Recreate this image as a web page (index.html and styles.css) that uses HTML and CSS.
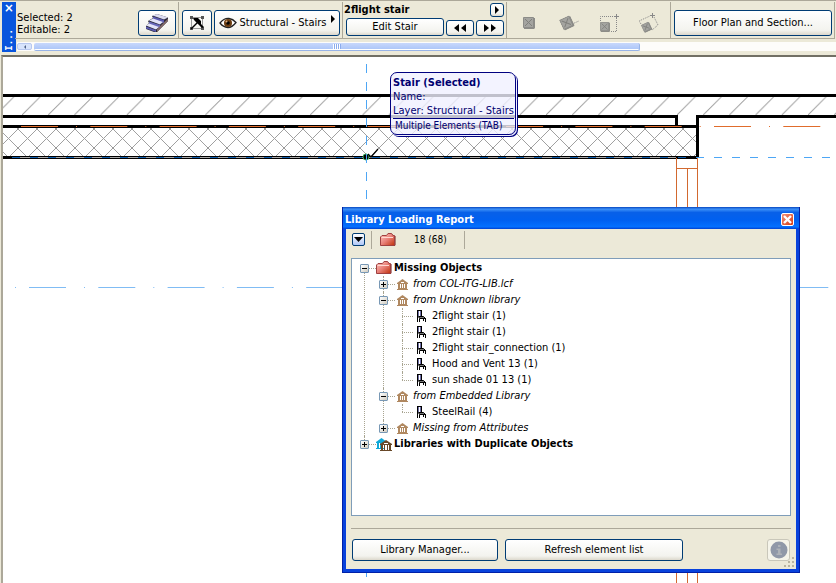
FILE: index.html
```html
<!DOCTYPE html>
<html lang="en">
<head>
<meta charset="utf-8">
<title>Library Loading Report</title>
<link rel="stylesheet" href="styles.css">
</head>
<body>
<svg class="defs" width="0" height="0" aria-hidden="true">
  <defs>
    <linearGradient id="red" x1="0" y1="0" x2="1" y2="1">
      <stop offset="0" stop-color="#ffc8c0"/><stop offset=".5" stop-color="#e88078"/><stop offset="1" stop-color="#c03008"/>
    </linearGradient>
    <symbol id="folder" viewBox="0 0 16 14">
      <path d="M1 13V4.500L2.500 3H7L8.500.8H12L13.500 3H15.500V12L14.500 13Z" fill="#701818"/>
      <path d="M.5 12.500V4L2 2.500H6.500L8 .5H11.500L13 2.500H14.500V12.500Z" fill="url(#red)" stroke="#a04040"/>
      <path d="M1.500 4.500H13" stroke="#ffd8d0"/>
    </symbol>
    <symbol id="library" viewBox="0 0 16 16">
      <path d="M2 7L7.500 3L13 7V8H2ZM3 8H5V13H3ZM6 8H7V13H6ZM8 8H9V13H8ZM10 8H12V13H10ZM3 12H12V13H13V14H2V13H3Z" fill="currentColor"/>
      <path d="M6 6.500H9" stroke="#fff"/>
    </symbol>
    <symbol id="libraries" viewBox="0 0 16 16">
      <path d="M0 6L5.500 2L11 6V7H0ZM1 7H3V12H1ZM4 7H5V12H4ZM0 12H8V13H0Z" fill="#10a8d8"/>
      <path d="M4 8L10 4L16 8V9H4ZM5 9H7V14H5ZM8 9H9V14H8ZM11 9H12V14H11ZM13 9H15V14H13ZM4 14H16V15H4Z" fill="#684828"/>
      <path d="M8 7.500H12" stroke="#fff"/>
    </symbol>
    <symbol id="chair" viewBox="0 0 16 16">
      <path d="M4 3H7V8H4Z" fill="#7070a8"/>
      <path d="M5.500 3V8" stroke="#fff"/>
      <path d="M3.500 2V14M7.500 2V8M3 2.500H8" stroke="#000" fill="none"/>
      <path d="M4.500 8.500H9.500L11.500 10.500H5.500Z" fill="#777" stroke="#000"/>
      <path d="M5.500 11V14M9.500 11V13M11.500 10V14" stroke="#000"/>
    </symbol>
    <symbol id="box" viewBox="0 0 12 12">
      <path d="M1 2L2 1H12V11L11 12H1Z" fill="#8c8c88"/>
      <path d="M.5 .5H10.500V10.500H.5Z" fill="#a4a4a0" stroke="#8c8c88"/>
      <path d="M2 2L9 9M9 2L2 9" stroke="#80807c"/>
    </symbol>
  </defs>
</svg>

<header class="infobox">
  <div class="grip"><button class="grip-close" aria-label="Close">×</button><span class="grip-label">I...</span></div>
  <div class="infobox-main">
    <div class="cells">
      <section class="cell cell-selection">
        <p class="counts">Selected: 2<br>Editable: 2</p>
        <button class="btn stair-btn" aria-label="Stair settings">
          <svg width="26" height="20" viewBox="0 0 26 20">
            <path d="M2 13L5 10L4 8L9 5L8 3L13 1L24 4.500V8L13 19H10L2 16Z" fill="#282838"/>
            <path d="M8.500 2.500L13 1L24 4.500L20 6.500Z" fill="#dcdcf0"/><path d="M9 3.500L20 7V10L9 6.500Z" fill="#5c5cb0"/>
            <path d="M5 7.500L9 5.500L19 9L16 11.500Z" fill="#e4e4f8"/><path d="M5 8.500L16 12V15L5 11.500Z" fill="#6868b8"/>
            <path d="M2 12.500L5 10.500L15 14L12 16.500Z" fill="#e4e4f8"/><path d="M2 13.500L12 17V19L2 15.500Z" fill="#5c5cb0"/>
            <path d="M13 16L24 5.500V8L13 19Z" fill="#806868"/>
          </svg>
        </button>
      </section>
      <section class="cell cell-layer">
        <button class="btn pick-btn" aria-label="Pick up settings">
          <svg width="16" height="16" viewBox="0 0 16 16">
            <path d="M2.500 2.500H13.500V13.500H2.500Z" fill="none" stroke="#999"/>
            <path d="M1 1H4V4H1ZM12 1H15V4H12ZM1 12H4V15H1ZM12 12H15V15H12Z" fill="#555"/>
            <path d="M2 14L9 7" stroke="#000" stroke-width="1.500"/><path d="M4 3H9L12 6L12 9L15 12L13 13L10 10L8 8L5 5Z" fill="#000"/>
          </svg>
        </button>
        <button class="btn layer-btn">
          <svg width="18" height="12" viewBox="0 0 18 12">
            <path d="M1 6Q5 1 10 1.500Q14 2 17 5.500Q13 10.500 9 10.500Q4 10 1 6Z" fill="#fff" stroke="#222" stroke-width="1.300"/>
            <circle cx="9" cy="6" r="4" fill="#6a3c10"/><circle cx="9" cy="6" r="1.800" fill="#000"/><circle cx="7.500" cy="4.500" r="1" fill="#e0b080"/>
          </svg>
          <span>Structural - Stairs</span>
          <svg class="flyout" width="4" height="8" viewBox="0 0 4 8"><path d="M0 0L4 4L0 8Z"/></svg>
        </button>
      </section>
      <section class="cell cell-object">
        <div class="object-head"><strong>2flight stair</strong>
          <button class="btn tiny-btn" aria-label="Choose object"><svg width="4" height="8" viewBox="0 0 4 8"><path d="M0 0L4 4L0 8Z"/></svg></button></div>
        <div class="object-actions">
          <button class="btn edit-btn">Edit Stair</button>
          <button class="btn step-btn" aria-label="Previous"><svg width="14" height="8" viewBox="0 0 14 8"><path d="M6 0V8L1 4ZM13 0V8L8 4Z"/></svg></button>
          <button class="btn step-btn" aria-label="Next"><svg width="14" height="8" viewBox="0 0 14 8"><path d="M1 0V8L6 4ZM8 0V8L13 4Z"/></svg></button>
        </div>
      </section>
      <section class="cell cell-anchors">
        <svg width="20" height="20" viewBox="0 0 20 20"><use href="#box" x="4" y="4" width="12" height="12"/></svg>
        <svg width="20" height="20" viewBox="0 0 20 20"><g transform="rotate(-25 8 10)"><use href="#box" x="2" y="4" width="12" height="12"/></g><path d="M13 11L20 8" stroke="#888" stroke-dasharray="1 1"/></svg>
        <svg width="20" height="20" viewBox="0 0 20 20"><use href="#box" x="1" y="9" width="10" height="10"/><path d="M1.500 8V3.500H15M17.500 5V18.500H12" fill="none" stroke="#888" stroke-dasharray="1 1"/><path d="M17.500 1V6M15 3.500H20" stroke="#888"/></svg>
        <svg width="20" height="20" viewBox="0 0 20 20"><g transform="rotate(-25 7 14)"><use href="#box" x="3" y="10" width="9" height="9"/></g><path d="M2 11L0 8L11 3M15 4L19 12L13 17" fill="none" stroke="#888" stroke-dasharray="1 1"/><path d="M13.500 0V5M11 2.500H16" stroke="#888"/></svg>
      </section>
      <section class="cell cell-plan"><button class="btn plan-btn">Floor Plan and Section...</button></section>
    </div>
    <div class="hscroll"><span class="hscroll-arrow"></span><span class="hscroll-thumb"></span></div>
  </div>
</header>

<main class="workspace">
  <svg class="plan" aria-label="Floor plan">
    <defs>
      <pattern id="hatch" x="22" y="97" width="26.200" height="18" patternUnits="userSpaceOnUse"><path d="M0 18L18 0" stroke="#a0a0a0"/></pattern>
      <pattern id="cross" x="18" y="129" width="19" height="19" patternUnits="userSpaceOnUse"><path d="M0 0L19 19M19 0L0 19" stroke="#a0a0a0"/><path d="M0 0H1V1H0ZM18 0H19V1H18ZM0 18H1V19H0ZM18 18H19V19H18Z" fill="#999"/></pattern>
    </defs>
    <g transform="translate(-3 -57)" fill="none">
      <rect x="3" y="97" width="2000" height="18" fill="url(#hatch)"/>
      <rect x="3" y="128" width="694" height="28" fill="url(#cross)"/>
      <path d="M3 95.500H2003M3 116.500H678M696 116.500H2003M676.500 115V127M3 126.500H697M697.500 115V157" stroke="#000" stroke-width="3"/>
      <path d="M21 126.500H2003" stroke="#e06c2c" stroke-dasharray="37 18 1 13.300"/>
      <path d="M3 157.500H697" stroke="#000" stroke-width="3"/>
      <path d="M12 157.500H676" stroke="#a8a8a8"/>
      <path d="M12 157.500H697" stroke="#1060b0" stroke-dasharray="8 10"/>
      <path d="M696 157.500H2003" stroke="#4da6f5" stroke-dasharray="8 10"/>
      <path d="M366.500 64V2000" stroke="#4da6f5" stroke-dasharray="9 9"/>
      <path d="M29 287.500H2003" stroke="#80bcf4" stroke-dasharray="37 18 1 13.300"/>
      <path d="M15 287.500H16" stroke="#80bcf4"/>
      <path d="M676.500 158V2000M687.500 168V2000M697.500 158V2000M676 168.500H698" stroke="#d2692f"/>
      <circle cx="366" cy="157" r="3" fill="#000" stroke="#30a050"/>
      <path d="M366.500 154V161" stroke="#4da6f5"/>
      <path d="M368 154L371 157L378 149" stroke="#000" stroke-width="1.300"/>
    </g>
  </svg>

  <aside class="info-tag">
    <strong>Stair (Selected)</strong>
    <span>Name:</span>
    <span>Layer: Structural - Stairs</span>
    <span class="info-tag-foot">Multiple Elements (TAB)</span>
  </aside>

  <section class="dialog" role="dialog" aria-labelledby="dlg-title">
    <header class="titlebar"><h1 id="dlg-title">Library Loading Report</h1>
      <button class="close" aria-label="Close"><svg width="9" height="9" viewBox="0 0 9 9"><path d="M1 1L8 8M8 1L1 8" stroke="#fff" stroke-width="2.400"/></svg></button></header>
    <div class="dialog-body">
      <div class="report-bar">
        <button class="menu-btn" aria-label="Options"><svg width="9" height="5" viewBox="0 0 9 5"><path d="M0 0H9L4.500 5Z"/></svg></button>
        <span class="rule"></span>
        <svg width="16" height="14"><use href="#folder"/></svg>
        <span class="report-count">18 (68)</span>
        <span class="rule"></span>
      </div>
      <div class="tree-box">
        <ul class="tree">
          <li><div class="row root"><button class="exp" aria-label="Collapse"></button><i class="stub"></i><svg width="16" height="14"><use href="#folder"/></svg><b>Missing Objects</b></div>
            <ul>
              <li><div class="row lib"><button class="exp plus" aria-label="Expand"></button><i class="stub"></i><svg width="16" height="16"><use href="#library"/></svg><em>from COL-ITG-LIB.lcf</em></div></li>
              <li><div class="row lib"><button class="exp" aria-label="Collapse"></button><i class="stub"></i><svg width="16" height="16"><use href="#library"/></svg><em>from Unknown library</em></div>
                <ul>
                  <li><div class="row leaf"><i class="stub"></i><svg width="16" height="16"><use href="#chair"/></svg><span>2flight stair (1)</span></div></li>
                  <li><div class="row leaf"><i class="stub"></i><svg width="16" height="16"><use href="#chair"/></svg><span>2flight stair (1)</span></div></li>
                  <li><div class="row leaf"><i class="stub"></i><svg width="16" height="16"><use href="#chair"/></svg><span>2flight stair_connection (1)</span></div></li>
                  <li><div class="row leaf"><i class="stub"></i><svg width="16" height="16"><use href="#chair"/></svg><span>Hood and Vent 13 (1)</span></div></li>
                  <li><div class="row leaf"><i class="stub"></i><svg width="16" height="16"><use href="#chair"/></svg><span>sun shade 01 13 (1)</span></div></li>
                </ul></li>
              <li><div class="row lib"><button class="exp" aria-label="Collapse"></button><i class="stub"></i><svg width="16" height="16"><use href="#library"/></svg><em>from Embedded Library</em></div>
                <ul>
                  <li><div class="row leaf"><i class="stub"></i><svg width="16" height="16"><use href="#chair"/></svg><span>SteelRail (4)</span></div></li>
                </ul></li>
              <li><div class="row lib"><button class="exp plus" aria-label="Expand"></button><i class="stub"></i><svg width="16" height="16"><use href="#library"/></svg><em>Missing from Attributes</em></div></li>
            </ul></li>
          <li><div class="row root"><button class="exp plus" aria-label="Expand"></button><i class="stub"></i><svg width="16" height="16"><use href="#libraries"/></svg><b>Libraries with Duplicate Objects</b></div></li>
        </ul>
      </div>
      <footer class="dialog-foot">
        <button class="btn manager-btn">Library Manager...</button>
        <button class="btn refresh-btn">Refresh element list</button>
        <button class="info-btn" aria-label="Information" disabled>
          <svg width="18" height="18" viewBox="0 0 18 18"><circle cx="9" cy="9" r="8.500" fill="#9098a8"/><path d="M8 4H10.500V6H8ZM6.500 7.500H10.500V12.500H12V14H6.500V12.500H8V9H6.500Z" fill="#aeb2b8"/></svg>
        </button>
      </footer>
      <svg class="sizer" width="12" height="12" viewBox="0 0 12 12"><path d="M9 1H11V3H9ZM5 5H7V7H5ZM9 5H11V7H9ZM1 9H3V11H1ZM5 9H7V11H5ZM9 9H11V11H9Z" fill="#b8b4a0"/></svg>
    </div>
  </section>
</main>
</body>
</html>
```
FILE: styles.css
```css
* { box-sizing: border-box; }

body {
  margin: 0;
  min-height: 100vh;
  display: flex;
  flex-direction: column;
  overflow: hidden;
  background: #ece9d8;
  color: #000;
  font: 11px/14px "DejaVu Sans Condensed", "Noto Sans", sans-serif;
}

button { font: inherit; color: inherit; padding: 0; }
svg { display: block; flex: none; }
ul, p, h1 { margin: 0; padding: 0; }
.defs { position: absolute; }

.btn {
  display: flex;
  align-items: center;
  justify-content: center;
  border: 1px solid #003c74;
  border-radius: 3px;
  background: linear-gradient(#fff, #f3f3ee 80%, #dcd8cc);
}

/* Info box */
.infobox {
  display: flex;
  height: 55px;
  padding: 1px 0 4px 2px;
  border-top: 1px solid #aca899;
}
.grip {
  flex: none;
  width: 14px;
  height: 50px;
  display: flex;
  flex-direction: column;
  align-items: center;
  justify-content: space-between;
  padding-bottom: 1px;
  background: #0855dd;
  color: #fff;
}
.grip-close { border: 0; background: none; color: #fff; font-weight: bold; font-size: 13px; line-height: 12px; }
.grip-label { writing-mode: vertical-rl; transform: rotate(180deg); font: bold 9px/12px "DejaVu Sans Mono", monospace; }
.infobox-main { flex: 1; min-width: 0; display: flex; flex-direction: column; margin-left: -1px; }
.cells { display: grid; grid-template-columns: repeat(5, minmax(0, 1fr)); height: 38px; padding-right: 1px; }
.cell {
  display: flex;
  padding: 0 2px 2px 3px;
  border-right: 1px solid #aca899;
  border-bottom: 1px solid #aca899;
}
.cell-selection { justify-content: space-between; align-items: flex-end; padding-left: 2px; }
.counts { line-height: 12px; }
.stair-btn { width: 38px; height: 26px; }
.cell-layer { align-items: flex-end; gap: 2px; }
.pick-btn { width: 30px; height: 26px; flex: none; }
.layer-btn { flex: 1; height: 26px; gap: 2px; }
.flyout { align-self: flex-start; margin: 4px 0 0 2px; }
.cell-object { flex-direction: column; justify-content: space-between; }
.object-head { display: flex; justify-content: space-between; line-height: 16px; margin-left: -2px; }
.tiny-btn { width: 14px; height: 14px; margin-top: 1px; }
.object-actions { display: flex; align-items: flex-end; gap: 2px; }
.edit-btn { flex: 1; height: 18px; }
.step-btn { width: 28px; height: 16px; }
.cell-anchors { align-items: center; gap: 20px; padding: 6px 0 0 12px; }
.cell-plan { align-items: flex-end; }
.plan-btn { flex: 1; height: 26px; }

.hscroll { display: flex; gap: 2px; height: 9px; margin: 3px 0 0 2px; background: #fdfcfa; }
.hscroll-arrow { width: 15px; height: 7px; margin-top: 1px; border: 1px solid #b8c8f0; border-radius: 2px; background: #d8e4fc; display: grid; place-items: center; }
.hscroll-arrow::before { content: ""; border: 2px solid transparent; border-right-color: #4d6185; border-left: 0; }
.hscroll-thumb { width: 74%; height: 8px; margin-top: 1px; border-bottom: 1px solid #98b4e8; border-right: 1px solid #98b4e8; border-radius: 2px; display: grid; place-items: center; background: linear-gradient(#c8d8fc, #b0c8f8 80%, #fff 81%); }
.hscroll-thumb::before { content: ""; width: 8px; height: 5px; background: repeating-linear-gradient(90deg, #fff 0 1px, #8cacec 1px 2px); }

/* Drawing area */
.workspace {
  flex: 1;
  position: relative;
  margin-left: 1px;
  border-top: 2px solid #716f64;
  border-left: 2px solid #aca899;
  background: #fff;
}
.plan { position: absolute; inset: 0; width: 100%; height: 100%; }

.info-tag {
  position: absolute;
  left: 387px;
  top: 15px;
  display: flex;
  flex-direction: column;
  padding: 3px 1px 1px 2px;
  border: 1px solid #000080;
  border-radius: 7px;
  background: rgba(240, 240, 255, .8);
  box-shadow: 1px 1px 0 #eef, 2px 2px 0 #000080;
  color: #000070;
  white-space: nowrap;
}
.info-tag-foot { border-top: 1px solid #000080; padding-left: 2px; font-size: 10px; }

/* Report window */
.dialog {
  position: absolute;
  left: 339px;
  top: 150px;
  width: 458px;
  display: flex;
  flex-direction: column;
  background: #0842dc;
  border: solid #0020a8;
  border-width: 0 1px 1px;
  padding: 0 3px 3px;
}
.titlebar {
  display: flex;
  align-items: center;
  justify-content: space-between;
  height: 22px;
  margin: 0 -3px;
  padding: 3px 5px 0 2px;
  background: linear-gradient(#0848c0, #3c90f8 10%, #0860e8 25%, #0060f0 60%, #0470ff 90%, #0040d0);
  color: #fff;
}
.titlebar h1 { font-size: 11px; line-height: 14px; }
.close { display: grid; place-items: center; width: 13px; height: 13px; border: 1px solid #fff; border-radius: 2px; background: linear-gradient(135deg, #f09078, #d83c14); }
.dialog-body { position: relative; background: #ece9d8; padding: 0 5px 8px; }
.report-bar { display: flex; align-items: center; height: 21px; }
.menu-btn { width: 13px; height: 13px; display: grid; place-items: center; border: 1px solid #003c74; border-radius: 2px; background: linear-gradient(#fff, #b0c8f8); margin-left: 1px; }
.rule { width: 1px; height: 18px; background: #aca899; margin: 0 8px 0 6px; }
.report-count { font-size: 10px; margin: 0 11px 0 18px; }
.tree-box { height: 258px; margin-top: 8px; border: 1px solid #7f9db9; background: #fff; padding: 1px 8px; }

.tree ul { margin-left: 19px; }
.tree li { position: relative; list-style: none; }
.tree li::before { content: ""; position: absolute; left: 4px; top: 0; bottom: 0; border-left: 1px dotted #a8a490; }
.tree li:last-child::before { bottom: auto; height: 8px; }
.tree > li:first-child::before { top: 8px; }
.row { position: relative; display: flex; align-items: center; height: 16px; white-space: nowrap; }
.stub { border-top: 1px dotted #a8a490; width: 7px; }
.leaf .stub { width: 11px; margin: 0 1px 0 4px; }
.row svg { margin-right: 2px; }
.exp {
  width: 9px;
  height: 9px;
  border: 1px solid #7898b5;
  border-radius: 1px;
  background: linear-gradient(#000, #000) center / 5px 1px no-repeat, linear-gradient(135deg, #fff, #d0ccc0);
}
.exp.plus { background: linear-gradient(#000, #000) center / 5px 1px no-repeat, linear-gradient(#000, #000) center / 1px 5px no-repeat, linear-gradient(135deg, #fff, #d0ccc0); }
.lib svg { color: #b08860; }

.dialog-foot { display: flex; gap: 7px; margin-top: 12px; padding-top: 10px; border-top: 1px solid #aca899; }
.manager-btn { width: 146px; height: 22px; margin-left: 1px; }
.refresh-btn { width: 178px; height: 22px; }
.info-btn { width: 23px; height: 22px; margin: 0 1px 0 auto; display: grid; place-items: center; border: 1px solid #c9c7ba; border-radius: 3px; background: #f5f4ea; }
.sizer { position: absolute; right: 1px; bottom: 1px; }
```
